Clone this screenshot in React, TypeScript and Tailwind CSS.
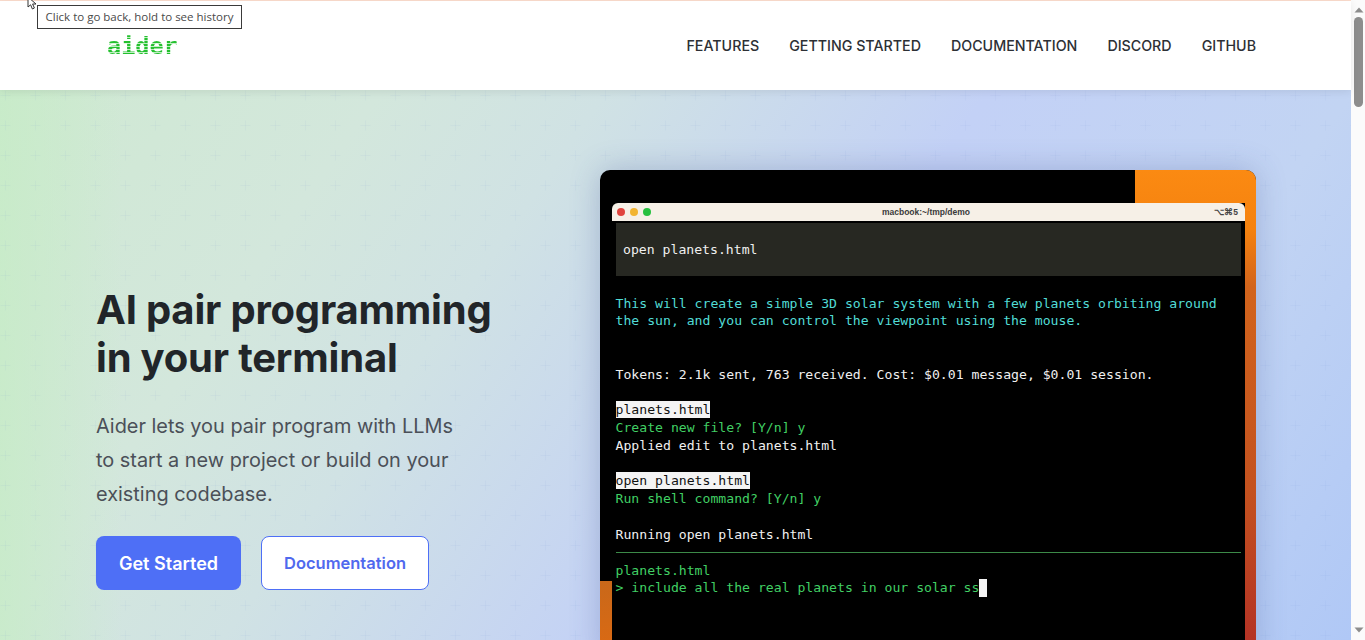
const NAV = ["FEATURES", "GETTING STARTED", "DOCUMENTATION", "DISCORD", "GITHUB"];

function Plus() {
  return (
    <svg className="absolute inset-0 h-full w-full" aria-hidden="true">
      <defs>
        <pattern id="plus" x="0" y="0" width="30" height="30" patternUnits="userSpaceOnUse">
          <path d="M0.5 5.5H10.5M5.5 0.5V10.5" stroke="#5f86c8" strokeOpacity="0.06" strokeWidth="1" fill="none" />
        </pattern>
      </defs>
      <rect width="100%" height="100%" fill="url(#plus)" />
    </svg>
  );
}

function Line({ children, className = "" }: { children?: React.ReactNode; className?: string }) {
  return <div className={`h-[17.8px] whitespace-pre leading-[17.8px] ${className}`}>{children}</div>;
}

function Hl({ children }: { children: React.ReactNode }) {
  return <span className="bg-[#f4f4f4] text-[#111] py-px">{children}</span>;
}

function Terminal() {
  return (
    <div className="relative z-10 mt-[80px] h-[490px] w-[656px] shrink-0 overflow-hidden rounded-t-[10px] bg-black pl-[12px] pr-[11px] pt-[33px] shadow-[0_0_30px_rgba(60,80,140,0.28)]">
      <div className="absolute right-0 top-0 h-full w-[121px] bg-[linear-gradient(180deg,#fb8a12_0%,#f5820f_12%,#d2641c_24%,#c4521f_65%,#b22f26_100%)]" />
      <div className="absolute bottom-0 left-0 h-[79px] w-[12px] bg-[linear-gradient(180deg,#c9681a,#dd6a12)]" />
      <div className="relative h-full bg-black font-['DejaVu_Sans_Mono','Liberation_Mono',monospace] text-[13.15px] text-[#f0f0f0]">
        <div className="relative flex h-[18px] items-center justify-center rounded-t-[6px] bg-[#f6f0e7] font-['Liberation_Sans',sans-serif] text-[8.5px] font-bold text-[#3a3a3a]">
          <div className="absolute left-[5px] flex gap-[5px]">
            <span className="h-[8px] w-[8px] rounded-full bg-[#e0443e]" />
            <span className="h-[8px] w-[8px] rounded-full bg-[#f2b431]" />
            <span className="h-[8px] w-[8px] rounded-full bg-[#27c03f]" />
          </div>
          <span className="mr-[5px]">macbook:~/tmp/demo</span>
          <span className="absolute right-[7px] text-[#444]">⌥⌘5</span>
        </div>
        <div className="ml-[4px] mr-[4px] mt-[2px] flex h-[53px] items-center bg-[#272822] pl-[7px]">open planets.html</div>
        <div className="ml-[3.5px] mr-[4px] pt-[18.5px]">
          <Line className="text-[#52dcd6]">This will create a simple 3D solar system with a few planets orbiting around</Line>
          <Line className="text-[#52dcd6]">the sun, and you can control the viewpoint using the mouse.</Line>
          <Line />
          <Line />
          <Line>Tokens: 2.1k sent, 763 received. Cost: $0.01 message, $0.01 session.</Line>
          <Line />
          <Line><Hl>planets.html</Hl></Line>
          <Line className="text-[#41cf64]">Create new file? [Y/n] y</Line>
          <Line>Applied edit to planets.html</Line>
          <Line />
          <Line><Hl>open planets.html</Hl></Line>
          <Line className="text-[#41cf64]">Run shell command? [Y/n] y</Line>
          <Line />
          <Line>Running open planets.html</Line>
          <div className="mt-[8px] h-px bg-[#3c8a48]" />
          <Line className="mt-[9px] text-[#41cf64]">planets.html</Line>
          <Line className="text-[#41cf64]">
            {"> include all the real planets in our solar ss"}
            <span className="inline-block h-[18px] w-[8px] bg-[#f4f4f4] align-top" />
          </Line>
        </div>
      </div>
    </div>
  );
}

export default function App() {
  return (
    <div className="relative flex h-[640px] overflow-hidden bg-white font-['Inter',sans-serif]">
      <div className="flex min-w-0 flex-1 flex-col">
        <div className="h-px bg-[#fbdccd]" />
        <header className="relative z-20 flex h-[89px] items-center justify-between bg-white pl-[107px] pr-[95px] shadow-[0_2px_8px_rgba(0,0,0,0.08)]">
          <span className="mt-[1px] bg-[repeating-linear-gradient(180deg,#25c02f_0px,#25c02f_2px,#bdeec0_2px,#bdeec0_3px)] bg-clip-text font-['DejaVu_Sans_Mono',monospace] text-[23.5px] font-bold leading-[28px] text-transparent blur-[0.4px]">
            aider
          </span>
          <nav className="flex gap-[30px] text-[14.25px] font-medium text-[#2d3035]">
            {NAV.map((n) => (
              <a key={n}>{n}</a>
            ))}
          </nav>
        </header>
        <main className="relative flex flex-1 items-start overflow-hidden bg-[linear-gradient(90deg,rgba(198,236,198,0.75)_0%,rgba(198,236,198,0)_9%),linear-gradient(125deg,#cfe9d2_0%,#d3e7dc_22%,#d0e2e4_35%,#c3d1f6_57%,#c2d4f3_78%,#b0c8f6_100%)] pl-[96px]">
          <Plus />
          <section className="relative w-[504px] shrink-0 pt-[196px]">
            <h1 className="text-[40px] font-bold leading-[48px] tracking-[-0.2px] text-[#212529]">
              AI pair programming
              <br />
              in your terminal
            </h1>
            <p className="mt-[27px] text-[19.9px] leading-[34px] text-[#4b5058]">
              Aider lets you pair program with LLMs
              <br />
              to start a new project or build on your
              <br />
              existing codebase.
            </p>
            <div className="mt-[25px] flex gap-[20px] font-semibold">
              <a className="flex h-[54px] w-[145px] items-center justify-center rounded-[8px] bg-[#4e6ff6] text-[18px] text-white">Get Started</a>
              <a className="flex h-[54px] w-[168px] items-center justify-center rounded-[8px] border border-[#4e6ff6] bg-white text-[16.5px] text-[#5069ee]">Documentation</a>
            </div>
          </section>
          <Terminal />
        </main>
      </div>

      <div className="flex w-[14px] shrink-0 flex-col items-center bg-[#fbfbfb] pl-px">
        <svg width="10" height="6" viewBox="0 0 10 6" className="mt-[7px]"><path d="M5 0.5 9.5 5.5H0.5Z" fill="#8d8d8d" /></svg>
        <div className="mt-[4px] h-[90px] w-[9px] rounded-full bg-[#8d8d8d]" />
        <div className="flex-1" />
        <svg width="10" height="6" viewBox="0 0 10 6" className="mb-[7px]"><path d="M5 5.5 9.5 0.5H0.5Z" fill="#8d8d8d" /></svg>
      </div>

      <div className="absolute left-[37px] top-[5px] z-30 flex h-[24px] w-[205px] items-center justify-center border border-[#3a3a3a] bg-white font-['Open_Sans','Noto_Sans',sans-serif] text-[11.5px] text-[#4a4a4a]">
        Click to go back, hold to see history
      </div>
      <svg className="absolute left-[27px] top-[-4px] z-40" width="13" height="14" viewBox="0 0 13 14" aria-hidden="true">
        <path d="M1 1V11L3.6 8.8 5.4 13 7.4 12 5.6 8H9Z" fill="#fff" stroke="#333" strokeWidth="1" />
      </svg>
    </div>
  );
}
